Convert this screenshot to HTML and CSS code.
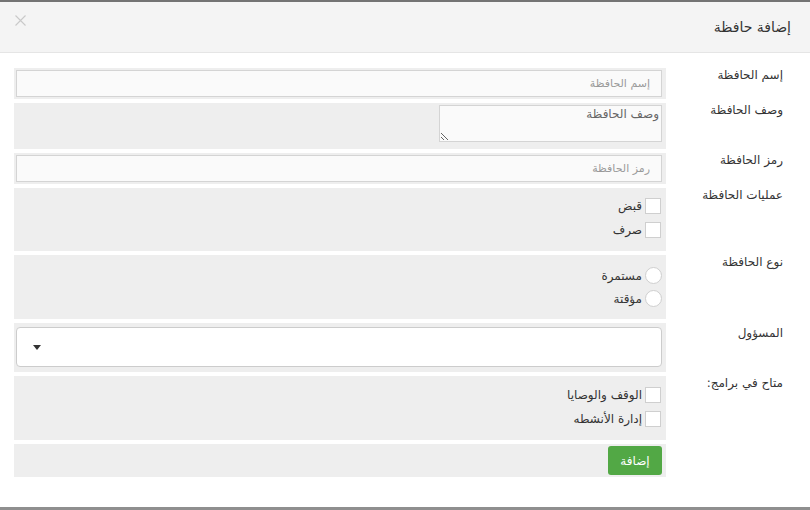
FILE: index.html
```html
<!DOCTYPE html>
<html lang="ar" dir="rtl">
<head>
<meta charset="utf-8">
<title>إضافة حافظة</title>
<link rel="stylesheet" href="styles.css">
</head>
<body>
<div class="modal">
  <div class="modal-header">
    <h4 class="modal-title">إضافة حافظة</h4>
    <button class="close" type="button" aria-label="close">
      <svg width="11" height="11" viewBox="0 0 11 11"><path d="M0.5 0.5 L10.5 10.5 M10.5 0.5 L0.5 10.5" stroke="#c9c9c9" stroke-width="1.1" fill="none"/></svg>
    </button>
  </div>
  <form class="modal-body">
    <div class="row">
      <label class="lbl">إسم الحافظة</label>
      <div class="field f-input"><input class="text-input" type="text" placeholder="إسم الحافظة"></div>
    </div>
    <div class="row">
      <label class="lbl">وصف الحافظة</label>
      <div class="field f-textarea"><textarea class="text-area" placeholder="وصف الحافظة"></textarea></div>
    </div>
    <div class="row">
      <label class="lbl">رمز الحافظة</label>
      <div class="field f-input"><input class="text-input" type="text" placeholder="رمز الحافظة"></div>
    </div>
    <div class="row">
      <label class="lbl">عمليات الحافظة</label>
      <div class="field f-checks">
        <label class="opt"><input type="checkbox" class="box"><span>قبض</span></label>
        <label class="opt"><input type="checkbox" class="box"><span>صرف</span></label>
      </div>
    </div>
    <div class="row">
      <label class="lbl">نوع الحافظة</label>
      <div class="field f-radios">
        <label class="opt opt-r"><input type="radio" name="t" class="circle"><span>مستمرة</span></label>
        <label class="opt opt-r"><input type="radio" name="t" class="circle"><span>مؤقتة</span></label>
      </div>
    </div>
    <div class="row">
      <label class="lbl lbl-sel">المسؤول</label>
      <div class="field f-select"><div class="select"><span class="arrow"></span></div></div>
    </div>
    <div class="row">
      <label class="lbl">متاح في برامج:</label>
      <div class="field f-checks2">
        <label class="opt"><input type="checkbox" class="box"><span>الوقف والوصايا</span></label>
        <label class="opt"><input type="checkbox" class="box"><span>إدارة الأنشطه</span></label>
      </div>
    </div>
    <div class="row">
      <span class="lbl"></span>
      <div class="field f-btn"><button type="button" class="btn">إضافة</button></div>
    </div>
  </form>
</div>
</body>
</html>
```
FILE: styles.css
```css
html, body {
  margin: 0;
  padding: 0;
  background: #8f8f8f;
}
body {
  font-family: "DejaVu Sans", "Noto Sans", sans-serif;
  color: #333;
  width: 810px;
  height: 510px;
  overflow: hidden;
}
.modal {
  width: 810px;
  height: 507px;
  background: #fff;
  border-top: 2px solid #747474;
  box-sizing: border-box;
}
.modal-header {
  height: 50px;
  background: #f4f4f4;
  border-bottom: 1px solid #e5e5e5;
  display: flex;
  align-items: center;
  justify-content: space-between;
  padding: 0 19px 0 15px;
}
.modal-title {
  margin: 0;
  font-size: 14px;
  font-weight: normal;
  color: #333;
}
.close {
  border: 0;
  background: none;
  padding: 0;
  margin-top: -13px;
  width: 11px;
  height: 11px;
  display: flex;
}
.modal-body {
  padding: 15px 0 0 14px;
  display: flex;
  flex-direction: column;
  gap: 4px;
}
.row {
  display: grid;
  grid-template-columns: 144px 652px;
}
.lbl {
  font-size: 12px;
  line-height: 14px;
  padding-right: 27px;
  padding-top: 0;
  color: #333;
}
.lbl-sel { padding-top: 3px; }
.field {
  background: #eeeeee;
  box-sizing: border-box;
}
.f-input {
  height: 31px;
  padding: 2px 4px 0 2px;
}
.text-input {
  display: block;
  width: 100%;
  height: 27px;
  box-sizing: border-box;
  border: 1px solid #d4d4d4;
  background: #fafafa;
  font-family: inherit;
  font-size: 11px;
  padding: 0 11px;
  margin: 0;
  outline: none;
}
.text-input::placeholder { color: #9a9a9a; }
.f-textarea {
  height: 46px;
  padding: 2px 4px 0 2px;
}
.text-area {
  display: block;
  width: 223px;
  height: 37px;
  box-sizing: border-box;
  border: 1px solid #d4d4d4;
  background: #fafafa;
  font-family: inherit;
  font-size: 12px;
  padding: 1px 2px;
  margin: 0;
  outline: none;
}
.text-area::placeholder { color: #666; }
.f-checks {
  height: 63px;
  padding: 6px 5px 0 0;
}
.f-radios {
  height: 64px;
  padding: 9px 4px 0 0;
}
.f-checks2 {
  height: 64px;
  padding: 7px 5px 0 0;
}
.opt {
  display: flex;
  align-items: center;
  gap: 3px;
  height: 24px;
  font-size: 12px;
  color: #333;
}
.opt-r { height: 23px; }
.box, .circle {
  -webkit-appearance: none;
  appearance: none;
  margin: 0;
  width: 16px;
  height: 16px;
  border: 1px solid #cfcfcf;
  background: #fff;
  box-sizing: border-box;
}
.circle {
  width: 17px;
  height: 17px;
  border-radius: 50%;
}
.f-select {
  height: 49px;
  padding: 4px 4px 0 2px;
}
.select {
  height: 40px;
  box-sizing: border-box;
  background: #fff;
  border: 1px solid #cccccc;
  border-radius: 4px;
  display: flex;
  align-items: center;
  justify-content: flex-end;
  padding-left: 16px;
}
.arrow {
  width: 0;
  height: 0;
  border-left: 4px solid transparent;
  border-right: 4px solid transparent;
  border-top: 5px solid #333;
  margin-top: 1px;
}
.f-btn {
  height: 33px;
  padding: 2px 4px 0 0;
}
.btn {
  display: block;
  width: 54px;
  height: 29px;
  border: 0;
  border-radius: 3px;
  background: #52a845;
  color: #fff;
  font-family: inherit;
  font-size: 12px;
  padding: 0;
}
```
